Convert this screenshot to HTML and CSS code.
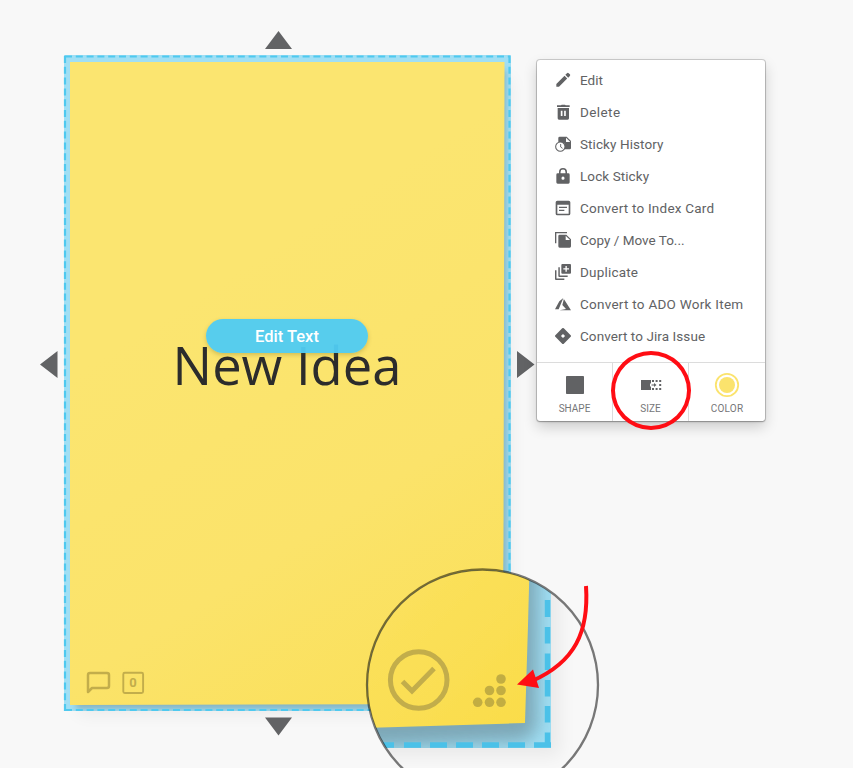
FILE: index.html
```html
<!DOCTYPE html>
<html lang="en">
<head>
<meta charset="utf-8">
<title>New Idea</title>
<link rel="stylesheet" href="styles.css">
</head>
<body>
<main class="board">
  <svg class="scene" viewBox="0 0 853 768">
    <defs>
      <linearGradient id="paper" gradientUnits="userSpaceOnUse" x1="190" y1="300" x2="470" y2="740">
        <stop offset="0" stop-color="#fbe570"/><stop offset=".5" stop-color="#fbe36a"/><stop offset="1" stop-color="#fadf55"/>
      </linearGradient>
      <linearGradient id="lensPaper" x1="0" y1="0" x2="1" y2="1">
        <stop offset="0" stop-color="#fbe263"/><stop offset="1" stop-color="#fadc49"/>
      </linearGradient>
      <filter id="soft" x="-20%" y="-20%" width="140%" height="140%"><feGaussianBlur stdDeviation="3"/></filter>
      <filter id="haze" x="-20%" y="-20%" width="140%" height="140%"><feGaussianBlur stdDeviation="9"/></filter>
      <filter id="edge" x="-5%" y="-5%" width="110%" height="110%"><feGaussianBlur stdDeviation=".65"/></filter>
      <clipPath id="selectionClip"><rect x="64" y="55" width="447" height="656"/></clipPath>
      <clipPath id="lensClip"><circle cx="482.5" cy="685" r="115"/></clipPath>
      <clipPath id="lensSelectionClip"><rect x="350" y="560" width="201" height="188"/></clipPath>
    </defs>

    <rect class="ambient" x="78" y="78" width="433" height="636" filter="url(#haze)"/>
    <rect class="selection" x="64" y="55" width="447" height="656"/>
    <g clip-path="url(#selectionClip)">
      <path class="shade" d="M76 70H506L507 700 504 709H76Z" filter="url(#soft)"/>
    </g>
    <path fill="url(#paper)" d="M70 62H504.500L503.500 540 502 704 70 705Z"/>
    <path class="dash" d="M65 56.500H510M65 710H510M65 56V711M509.500 56V711"/>

    <g class="handles">
      <path d="M278.500 31 292 49H265ZM278.500 735.500 292 717.500H265ZM40 364.500 57.500 351V378ZM534.500 364.500 517 351V378Z"/>
    </g>

    <g class="sticky-icon" fill="none" stroke-width="2.200">
      <path stroke-linejoin="round" stroke-width="2.500" d="M88 692V675Q88 673 90 673H107Q109 673 109 675V686Q109 688 107 688H92Z"/>
      <rect x="123.300" y="672.800" width="19.800" height="20.200" rx="1.500" stroke-width="1.900"/>
    </g>

    <g clip-path="url(#lensClip)">
      <rect class="canvas" x="360" y="560" width="250" height="220"/>
      <path class="ambient" d="M350 560H560V756H350Z" filter="url(#haze)"/>
      <rect class="selection" x="350" y="560" width="201" height="188"/>
      <g clip-path="url(#lensSelectionClip)">
        <path class="shade lens-shade" d="M350 560H538L537 730 525 741 350 748Z" filter="url(#haze)"/>
      </g>
      <g filter="url(#edge)">
        <path fill="url(#lensPaper)" d="M350 550H530L528 625 525 723 350 728.500Z"/>
        <path class="lens-dash" d="M547.500 600v17m0 10v16.500m0 10v16.500m0 10v16.500m0 9.500v16.500m0 10v12.500M378 745h16m10 0h17m9 0h17m9 0h17m9 0h17m9 0h17m9 0h17"/>
        <g class="sticky-icon" fill="none">
          <circle cx="418.700" cy="680" r="28.300" stroke-width="5"/>
          <path stroke-width="5" d="M402.500 681.500 412 691 434 668.500"/>
        </g>
        <g class="sticky-dots">
          <circle cx="501" cy="679" r="4.800"/>
          <circle cx="489.500" cy="690.500" r="4.800"/><circle cx="501" cy="690.500" r="4.800"/>
          <circle cx="477.700" cy="702.300" r="4.800"/><circle cx="489.500" cy="702.300" r="4.800"/><circle cx="501" cy="702.300" r="4.800"/>
        </g>
      </g>
    </g>
    <circle class="lens-rim" cx="482.500" cy="685" r="115.500"/>
    <path class="arrow-line" d="M586 586C589 632 575 662 532 681"/>
    <path class="arrow-head" d="M517 684.500 533 669.500 539 688Z"/>
  </svg>

  <div class="note-text">New Idea</div>
  <button class="edit-text">Edit Text</button>
  <span class="comment-count">0</span>

  <section class="menu">
    <ul class="actions">
      <li><svg viewBox="0 0 24 24"><path d="M2 18v4h4L18.300 9.700l-4-4zM22.300 6a1.800 1.800 0 0 0 0-2.500l-1.800-1.800a1.800 1.800 0 0 0-2.500 0l-2.500 2.500 4.300 4.300z"/></svg><span>Edit</span></li>
      <li><svg viewBox="0 0 24 24"><path fill-rule="evenodd" d="M4 6h17v15.500a2 2 0 0 1-2 2H6a2 2 0 0 1-2-2zm4.700 4v8h2.500v-8zm5 0v8h2.500v-8zM3 2h6l1-1h5l1 1h6v2.500H3z"/></svg><span class="delete">Delete</span></li>
      <li><svg viewBox="0 0 24 24"><path d="M7 1h10.500L24 7.500V18a2 2 0 0 1-2 2H5V3a2 2 0 0 1 2-2z"/><path fill="#fff" d="M16.500 2.500V9H23z"/><circle cx="8" cy="16" r="7" fill="#fff" stroke="currentColor" stroke-width="1.600"/><path fill="none" stroke="currentColor" stroke-width="1.400" d="M8.500 12v4.500l2.800 2"/></svg><span class="history">Sticky History</span></li>
      <li><svg viewBox="0 0 24 24"><path fill-rule="evenodd" d="M20 8h-2V6A6 6 0 0 0 6 6v2H4a2 2 0 0 0-2 2v11.500a2 2 0 0 0 2 2h16a2 2 0 0 0 2-2V10a2 2 0 0 0-2-2zm-8 9.500a2.300 2.300 0 1 1 0-4.600 2.300 2.300 0 0 1 0 4.600zM15.700 8H8.300V6a3.700 3.700 0 0 1 7.400 0z"/></svg><span class="history">Lock Sticky</span></li>
      <li><svg viewBox="0 0 24 24"><path fill-rule="evenodd" d="M3.500 1h17A2.500 2.500 0 0 1 23 3.500v17a2.500 2.500 0 0 1-2.500 2.500h-17A2.500 2.500 0 0 1 1 20.500v-17A2.500 2.500 0 0 1 3.500 1zm0 6v13.500h17V7zm2.500 3h12v2H6zm0 4.500h8v2H6z"/></svg><span class="card">Convert to Index Card</span></li>
      <li><svg viewBox="0 0 24 24"><path d="M0 0h18v2H2v15H0zM7 4h10l7 7v10.500a2 2 0 0 1-2 2H7a2 2 0 0 1-2-2V6a2 2 0 0 1 2-2z"/><path fill="#fff" d="M16 5.500V12h6.500z"/></svg><span>Copy / Move To...</span></li>
      <li><svg viewBox="0 0 24 24"><path fill-rule="evenodd" d="M11 0h11.500A1.500 1.500 0 0 1 24 1.500V13a1.500 1.500 0 0 1-1.500 1.500H11A1.500 1.500 0 0 1 9.500 13V1.500A1.500 1.500 0 0 1 11 0zm4.700 3v3.200h-3.200v2h3.200v3.300h2V8.200H21v-2h-3.300V3z"/><path d="M5 5h2.200v12.300H19v2.200H6.500A1.500 1.500 0 0 1 5 18zM0 9.500h2.200v12.300H14V24H1.500A1.500 1.500 0 0 1 0 22.500z"/></svg><span class="duplicate">Duplicate</span></li>
      <li><svg viewBox="0 0 24 24"><path d="M12.500 3 6.500 8 0 20h5.500zM13.300 4.500 24 21.500H7l9.500-2-5.500-6z"/></svg><span class="ado">Convert to ADO Work Item</span></li>
      <li><svg viewBox="0 0 24 24"><path fill-rule="evenodd" d="m10.800.500L.500 10.800a1.700 1.700 0 0 0 0 2.400l10.300 10.300a1.700 1.700 0 0 0 2.400 0l10.300-10.300a1.700 1.700 0 0 0 0-2.400L13.200.500a1.700 1.700 0 0 0-2.400 0zM12 8.900l3.100 3.100-3.100 3.100L8.900 12z"/></svg><span class="history">Convert to Jira Issue</span></li>
    </ul>
    <div class="tools">
      <div class="tool"><svg viewBox="0 0 26 26"><rect x="4" y="4" width="18" height="18" rx=".8"/></svg><span>SHAPE</span></div>
      <div class="tool"><svg viewBox="0 0 26 26"><path d="M3 8h10v3.500h-1v3h1V18H3zM13.500 12.500H16V11l2.500 2-2.500 2v-1.500h-2.500zM14 8h2v2h-2zm3.600 0h2v2h-2zm3.600 0h2v2h-2zM14 16h2v2h-2zm3.600 0h2v2h-2zm3.600 0h2v2h-2zm0-4h2v2h-2z"/></svg><span>SIZE</span></div>
      <div class="tool"><svg viewBox="0 0 26 26"><circle cx="13" cy="13" r="11.200" fill="#fff" stroke="#fbe36d" stroke-width="1.800"/><circle cx="13" cy="13" r="8" fill="#fbe36d"/></svg><span class="wide">COLOR</span></div>
    </div>
  </section>
  <div class="highlight"></div>
</main>
</body>
</html>
```

FILE: styles.css
```css
* { box-sizing: border-box; }
body { margin: 0; background: #f8f8f8; }
.board { position: relative; width: 853px; height: 768px; overflow: hidden; background: #f8f8f8; }
.scene { display: block; width: 853px; height: 768px; }
.canvas { fill: #f8f8f8; }
.ambient { fill: #000; opacity: .06; }
.selection { fill: #a0dff4; }
.shade { fill: #6b8995; opacity: .5; }
.lens-shade { opacity: .65; }
.dash { fill: none; stroke: #4fc9ef; stroke-width: 2.2; stroke-dasharray: 7 3.8; }
.lens-dash { fill: none; stroke: #4bc1e8; stroke-width: 5.5; }
.handles { fill: #626365; }
.sticky-icon { stroke: #c2ad4b; }
.sticky-dots { fill: #c2ad43; }
.lens-rim { fill: none; stroke: #000; stroke-opacity: .52; stroke-width: 2.3; }
.arrow-line { fill: none; stroke: #ff0d14; stroke-width: 4; }
.arrow-head { fill: #ff0d14; }

.note-text {
  position: absolute; left: 70px; top: 330px; width: 434px;
  font: 52.5px/70px "Open Sans", sans-serif; color: #2c2c2c; text-align: center;
}
.edit-text {
  position: absolute; left: 206px; top: 319px; width: 162px; height: 34px; padding: 1px 0 0;
  border: 0; border-radius: 17px; background: rgba(80, 204, 243, .96);
  box-shadow: 0 2px 4px rgba(90, 80, 20, .25);
  font: 500 16.5px/33px Roboto, sans-serif; color: #fff;
}
.comment-count {
  position: absolute; left: 123px; top: 674px; width: 20px;
  font: 700 13px/18px Roboto, sans-serif; color: #c2ad4b; text-align: center;
}

.menu {
  position: absolute; left: 537px; top: 60px; width: 228px; height: 361px;
  display: flex; flex-direction: column;
  border-radius: 3px; background: #fff; color: #616264;
  box-shadow: 0 0 0 1px rgba(0, 0, 0, .16), 0 1px 2px rgba(0, 0, 0, .24), 0 6px 14px rgba(0, 0, 0, .18);
}
.actions { flex: 1; margin: 0; padding: 4px 0 0 18px; list-style: none; }
.actions li { display: flex; align-items: center; gap: 9px; height: 32px; font: 13.5px/20px Roboto, sans-serif; white-space: nowrap; }
.actions svg { flex: none; width: 16px; height: 16px; fill: currentColor; }
.delete { letter-spacing: .4px; }
.history { letter-spacing: .08px; }
.card { letter-spacing: .22px; }
.duplicate { letter-spacing: .2px; }
.ado { letter-spacing: .26px; }
.tools { display: grid; grid-template-columns: 75px 76px 1fr; height: 59px; border-top: 1px solid #dcdcdc; }
.tool { display: flex; flex-direction: column; align-items: center; padding-top: 9px; font: 10px/12px Roboto, sans-serif; color: #757678; }
.tool + .tool { border-left: 1px solid #dcdcdc; }
.tool svg { width: 26px; height: 26px; margin-bottom: 5px; fill: #616264; }
.wide { letter-spacing: .2px; }
.highlight { position: absolute; left: 611px; top: 351px; width: 80px; height: 79px; border: 4px solid #ff0d14; border-radius: 50%; }
```
